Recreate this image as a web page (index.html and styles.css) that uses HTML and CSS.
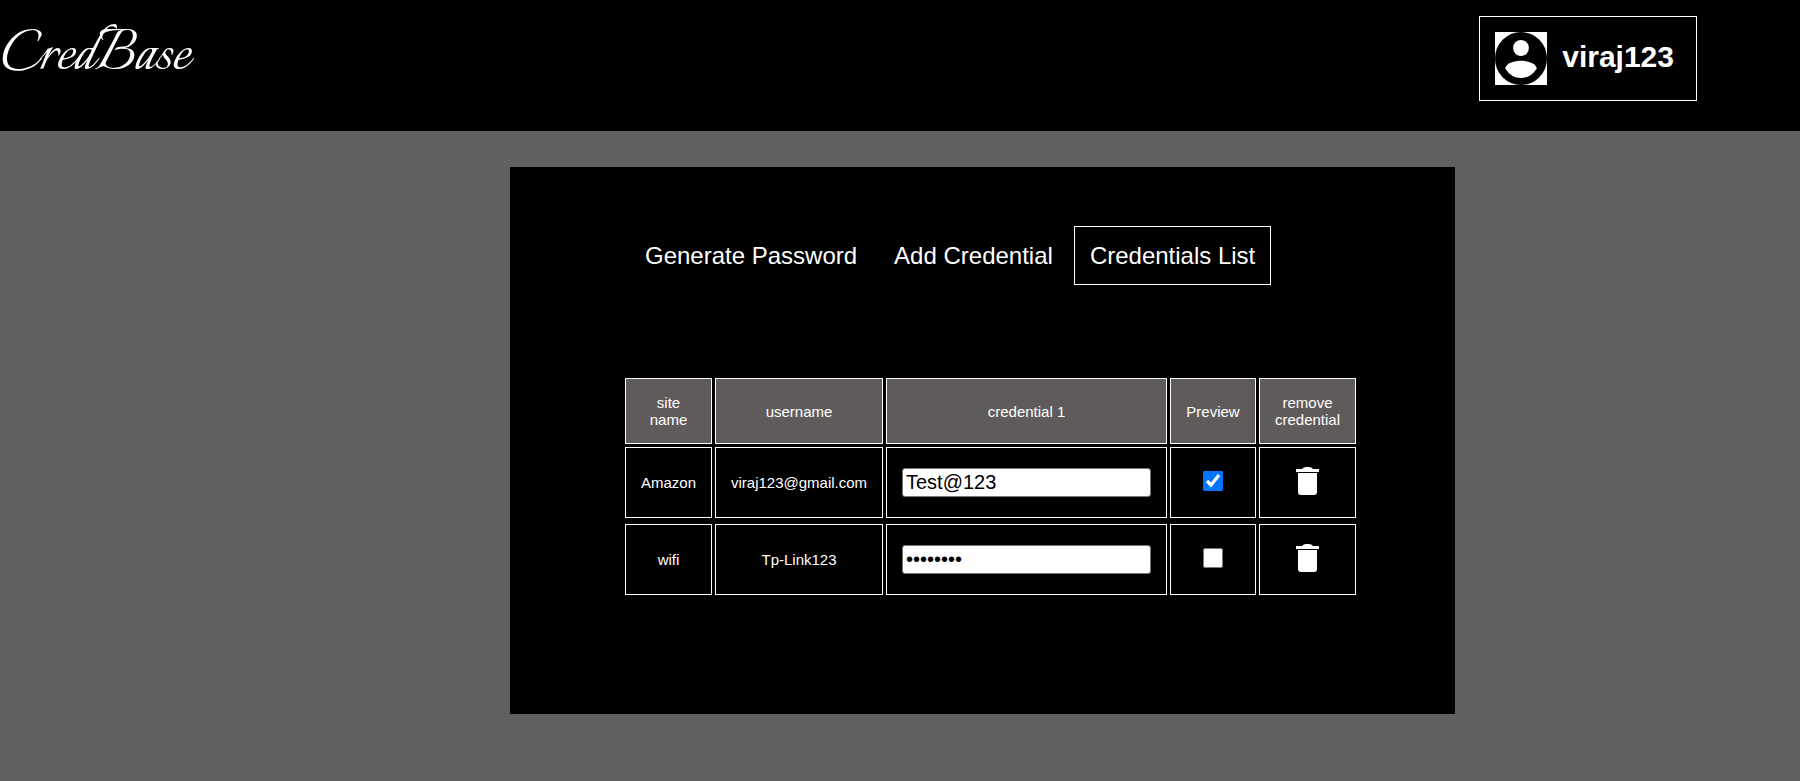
FILE: index.html
```html
<!DOCTYPE html>
<html lang="en">
<head>
<meta charset="utf-8">
<title>CredBase</title>
<link rel="stylesheet" href="styles.css">
</head>
<body>
<svg class="sprite">
  <symbol id="trash" viewBox="0 0 23 28">
    <path d="M0 2h6q1.500-2 4-2h3q2.500 0 4 2h6v3H0zM2 6h19v19q0 3-3 3H5q-3 0-3-3z"/>
  </symbol>
</svg>
<header class="header">
  <a class="logo" href="#">CredBase</a>
  <button class="user" type="button">
    <svg class="avatar" viewBox="0 0 52 53" aria-hidden="true">
      <rect width="52" height="53" fill="#fff"/>
      <ellipse cx="26" cy="26.500" rx="26" ry="26.500"/>
      <ellipse cx="26" cy="16" rx="7.900" ry="8" fill="#fff"/>
      <path d="M10.200 36.500C11 31 20 28.800 26 28.800S41 31 41.800 36.500Q36 46 26 46T10.200 36.500z" fill="#fff"/>
    </svg>
    <span class="user-name">viraj123</span>
  </button>
</header>
<main class="page">
  <section class="panel">
    <nav class="tabs">
      <a class="tab" href="#">Generate Password</a>
      <a class="tab" href="#">Add Credential</a>
      <a class="tab tab-active" href="#" aria-current="page">Credentials List</a>
    </nav>
    <table class="credentials">
      <colgroup>
        <col class="col-site"><col class="col-user"><col class="col-secret"><col class="col-preview"><col class="col-remove">
      </colgroup>
      <thead>
        <tr><th>site name</th><th>username</th><th>credential 1</th><th>Preview</th><th>remove credential</th></tr>
      </thead>
      <tbody>
        <tr>
          <td>Amazon</td>
          <td>viraj123@gmail.com</td>
          <td><input class="secret" type="text" value="Test@123" aria-label="Amazon credential"></td>
          <td><input class="preview" type="checkbox" checked aria-label="Preview Amazon credential"></td>
          <td><button class="remove" type="button" aria-label="Remove Amazon"><svg class="trash"><use href="#trash"/></svg></button></td>
        </tr>
      </tbody>
      <tbody>
        <tr>
          <td>wifi</td>
          <td>Tp-Link123</td>
          <td><input class="secret" type="password" value="Test@123" aria-label="wifi credential"></td>
          <td><input class="preview" type="checkbox" aria-label="Preview wifi credential"></td>
          <td><button class="remove" type="button" aria-label="Remove wifi"><svg class="trash"><use href="#trash"/></svg></button></td>
        </tr>
      </tbody>
    </table>
  </section>
</main>
</body>
</html>
```
FILE: styles.css
```css
* { box-sizing: border-box; }

body {
  margin: 0;
  min-height: 100vh;
  background: #616161;
  color: #fff;
  font-family: Arial, "Liberation Sans", sans-serif;
}

.sprite { display: none; }

.header {
  display: flex;
  justify-content: space-between;
  align-items: flex-start;
  padding: 16px 103px 30px 0;
  background: #000;
}

.logo {
  color: #fff;
  font: 71px/80px "Italianno", "Tangerine", "Liberation Serif", cursive;
  text-decoration: none;
}

.user {
  display: flex;
  align-items: center;
  gap: 15px;
  padding: 15px 22px 15px 15px;
  border: 1px solid #fff;
  background: #000;
  color: #fff;
  font: bold 30px/34px Arial, "Liberation Sans", sans-serif;
}

.user-name { padding-bottom: 4px; }

.avatar {
  display: block;
  width: 52px;
  height: 53px;
}

.page {
  display: grid;
  grid-template-columns: 510fr 945fr 345fr;
  padding-top: 36px;
}

.panel {
  grid-column: 2;
  padding: 59px 96px 116px 112px;
  background: #000;
}

.tabs {
  display: flex;
  gap: 5px;
  margin: 0 0 90px 7px;
}

.tab {
  padding: 15px;
  border: 1px solid transparent;
  color: #fff;
  font-size: 24px;
  line-height: 27px;
  text-decoration: none;
  white-space: nowrap;
}

.tab-active { border-color: #fff; }

.credentials {
  width: 100%;
  table-layout: fixed;
  border-spacing: 3px;
  font-size: 15px;
  line-height: 17px;
  text-align: center;
}

.col-site { width: 87px; }
.col-secret { width: 281px; }
.col-user { width: 168px; }
.col-preview { width: 86px; }
.col-remove { width: 97px; }

.credentials th,
.credentials td {
  padding: 15px;
  border: 1px solid #fff;
}

.credentials th {
  background: #605b5b;
  font-weight: normal;
}

.credentials td { height: 71px; }

/* Empty row: doubles the spacing between entries. */
tbody + tbody::before {
  content: "";
  display: table-row;
}

.secret {
  display: block;
  width: 100%;
  height: 29px;
  padding: 2px 3px;
  border: 1px solid #767676;
  border-radius: 3px;
  font: 20px Arial, "Liberation Sans", sans-serif;
}

.preview {
  display: block;
  width: 20px;
  height: 20px;
  margin: 0 auto 3px;
}

.remove {
  display: block;
  margin: 0 auto 3px;
  padding: 0;
  border: 0;
  background: none;
}

.trash {
  display: block;
  width: 23px;
  height: 28px;
  fill: #fff;
}
```
